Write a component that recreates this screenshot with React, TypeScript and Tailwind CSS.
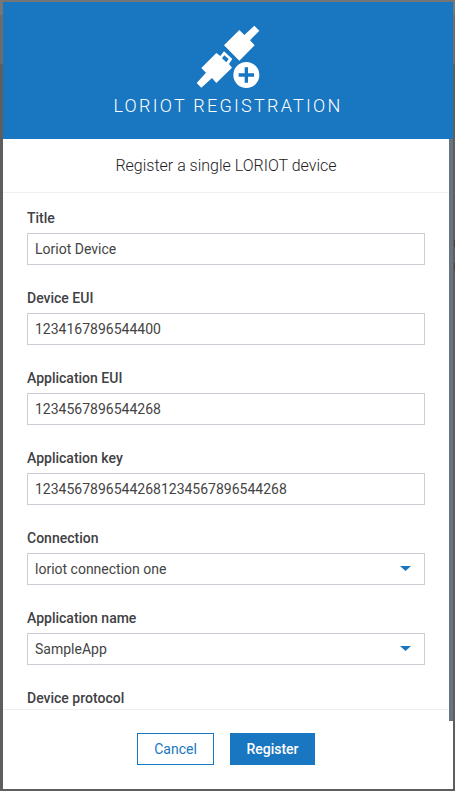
import { useId, useState } from 'react';

function PlugIcon() {
  return (
    <svg className="size-16" viewBox="48 30 192 192" fill="#fff" aria-hidden="true">
      <path d="M132 91 178 45 193 60 223 32 238 47 210 76 224 91 178 137Z" />
      <path
        fillRule="evenodd"
        d="M64 159 109 114 121 123 132 109 157 132 147 147 156 158 109 204 96 189 64 218 50 204 78 173ZM133 121 126 130 139 142 146 132Z"
      />
      <circle cx="199" cy="180" r="39" />
      <path fill="#1976c0" d="M194 157h10v18h18v10h-18v18h-10v-18h-18v-10h18z" />
    </svg>
  );
}

const labelClass = 'mb-[5px] block text-sm leading-5 font-medium';
const controlClass =
  'block h-8 w-full appearance-none rounded-none border border-[#c8ced4] bg-white px-[7px] text-sm text-[#444] outline-none focus:border-[#1976c0]';

function TextField({ label, initial }: { label: string; initial: string }) {
  const id = useId();
  const [value, setValue] = useState(initial);
  return (
    <div>
      <label htmlFor={id} className={labelClass}>
        {label}
      </label>
      <input
        id={id}
        type="text"
        className={controlClass}
        value={value}
        onChange={(e) => setValue(e.target.value)}
      />
    </div>
  );
}

function SelectField({ label, options }: { label: string; options: string[] }) {
  const id = useId();
  return (
    <div className="shrink-0">
      <label htmlFor={id} className={labelClass}>
        {label}
      </label>
      <div className="relative">
        <select id={id} className={controlClass}>
          {options.map((o) => (
            <option key={o}>{o}</option>
          ))}
        </select>
        <svg
          className="pointer-events-none absolute top-[13px] right-[14px] h-[5px] w-[11px]"
          viewBox="0 0 11 5"
          fill="#1976c0"
          aria-hidden="true"
        >
          <path d="M0 0h11L5.500 5z" />
        </svg>
      </div>
    </div>
  );
}

export default function App() {
  return (
    <div className="relative flex h-screen flex-col bg-[linear-gradient(#767676_15px,#6e6c6b_15px,#6e6c6b_64px,#5e5e5e_64px)] py-0.5 pr-0.5 pl-[3px] font-[Roboto,sans-serif] text-[#3f4145]">
      <div role="dialog" aria-labelledby="dialog-title" className="flex min-h-0 flex-1 flex-col bg-white">
        <header className="flex flex-col items-center bg-[#1976c0] pt-[23px] pb-[21px] text-white">
          <PlugIcon />
          <h1
            id="dialog-title"
            className="mt-[5px] text-lg leading-6 font-light tracking-[0.125em] uppercase"
          >
            Loriot registration
          </h1>
        </header>

        <div className="flex min-h-0 flex-1">
          <div className="flex min-w-0 flex-1 flex-col">
            <p className="border-b border-[#f0f0f0] py-[14px] text-center text-base leading-[25px] font-light text-[#222]">
              Register a single LORIOT device
            </p>
            <form className="flex min-h-0 flex-1 flex-col gap-[23px] overflow-hidden px-6 pt-[15px]">
              <TextField label="Title" initial="Loriot Device" />
              <TextField label="Device EUI" initial="1234167896544400" />
              <TextField label="Application EUI" initial="1234567896544268" />
              <TextField label="Application key" initial="12345678965442681234567896544268" />
              <SelectField label="Connection" options={['loriot connection one']} />
              <SelectField label="Application name" options={['SampleApp']} />
              <SelectField label="Device protocol" options={[]} />
            </form>
            <footer className="flex justify-center gap-4 border-t border-[#f0f0f0] pt-[23px] pb-6">
              <button
                type="button"
                className="h-8 w-[77px] border border-[#1976c0] bg-white text-sm text-[#1976c0]"
              >
                Cancel
              </button>
              <button
                type="button"
                className="h-8 w-[85px] bg-[#1976c0] text-sm font-medium text-white"
              >
                Register
              </button>
            </footer>
          </div>
          <div className="w-1 shrink-0" aria-hidden="true">
            <div className="h-[89.500%] bg-[#68757f]" />
          </div>
        </div>
      </div>
      <div className="absolute top-60 right-0 h-[7px] w-px bg-[#4f3f35]" aria-hidden="true" />
      <div className="absolute top-[263px] right-0 h-[7px] w-px bg-[#4f3f35]" aria-hidden="true" />
    </div>
  );
}
